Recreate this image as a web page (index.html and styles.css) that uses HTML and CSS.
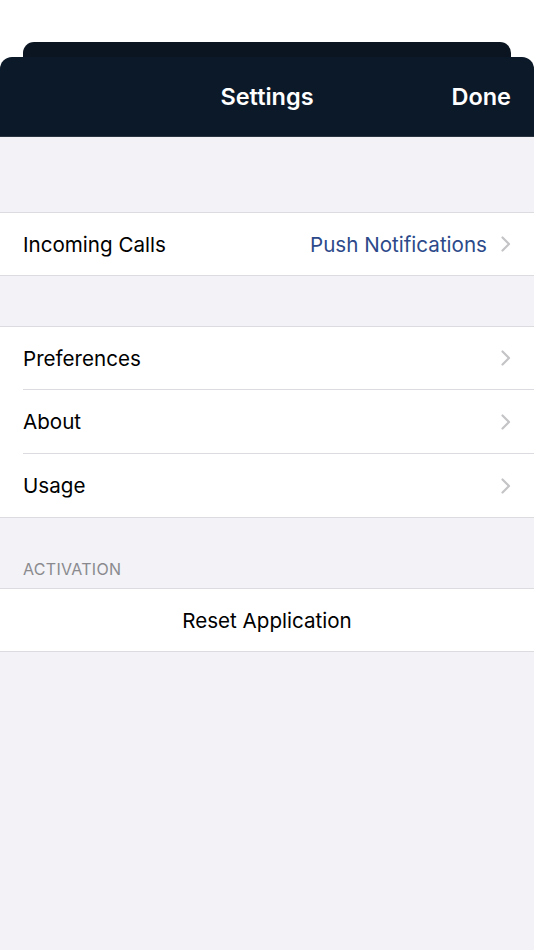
FILE: index.html
```html
<!DOCTYPE html>
<html lang="en">
<head>
  <meta charset="UTF-8">
  <title>Settings</title>
  <meta name="viewport" content="width=device-width, initial-scale=1">
  <link rel="stylesheet" href="styles.css">
</head>
<body>
  <div class="sheet-back"></div>
  <div class="sheet">
    <div class="navbar">
      <div></div>
      <div class="title">Settings</div>
      <div class="done">Done</div>
    </div>

    <div class="group first">
      <div class="row">
        <span class="label">Incoming Calls</span>
        <span class="value">Push Notifications</span>
        <svg class="chev" width="10" height="16" viewBox="0 0 10 16"><path d="M1.5 1.5 L8 8 L1.5 14.5" fill="none" stroke="#c4c4c7" stroke-width="2.2" stroke-linecap="round" stroke-linejoin="round"/></svg>
      </div>
    </div>

    <div class="group">
      <div class="row">
        <span class="label">Preferences</span>
        <svg class="chev" width="10" height="16" viewBox="0 0 10 16"><path d="M1.5 1.5 L8 8 L1.5 14.5" fill="none" stroke="#c4c4c7" stroke-width="2.2" stroke-linecap="round" stroke-linejoin="round"/></svg>
      </div>
      <div class="row">
        <span class="label">About</span>
        <svg class="chev" width="10" height="16" viewBox="0 0 10 16"><path d="M1.5 1.5 L8 8 L1.5 14.5" fill="none" stroke="#c4c4c7" stroke-width="2.2" stroke-linecap="round" stroke-linejoin="round"/></svg>
      </div>
      <div class="row">
        <span class="label">Usage</span>
        <svg class="chev" width="10" height="16" viewBox="0 0 10 16"><path d="M1.5 1.5 L8 8 L1.5 14.5" fill="none" stroke="#c4c4c7" stroke-width="2.2" stroke-linecap="round" stroke-linejoin="round"/></svg>
      </div>
    </div>

    <div class="section-title">ACTIVATION</div>
    <div class="group tight">
      <div class="row center">Reset Application</div>
    </div>
  </div>
</body>
</html>
```

FILE: styles.css
```css
body { margin: 0; padding: 0; background: #fff; font-family: Inter, "Open Sans", sans-serif; }
.sheet-back { margin: 42px 23px 0; height: 15px; background: #0b1521; border-radius: 11px 11px 0 0; }
.sheet { background: #f2f2f7; border-radius: 12px 12px 0 0; overflow: hidden; min-height: 893px; }
.navbar { height: 79px; background: #0c1928; color: #fff; display: grid; grid-template-columns: 1fr auto 1fr; align-items: center; font-size: 23.5px; font-weight: 600; padding: 0 23px; border-bottom: 1px solid #2a3440; }
.title { text-align: center; }
.done { text-align: right; }
.group { background: #fff; border-top: 1px solid #dcdce0; border-bottom: 1px solid #dcdce0; margin-top: 50px; }
.group.first { margin-top: 75px; }
.group.tight { margin-top: 0; }
.row { height: 62px; display: flex; align-items: center; margin-left: 23px; padding-right: 23px; font-size: 20.6px; color: #000; }
.row + .row { height: 63px; border-top: 1px solid #dcdce0; }
.label { flex: 1; }
.value { color: #2c4a8a; margin-right: 14px; }
.chev { display: block; }
.row.center { justify-content: center; margin-left: 0; padding-right: 0; }
.section-title { margin-top: 40px; padding: 0 23px 8px; font-size: 16px; color: #8a8a8e; letter-spacing: 0.3px; height: 22px; line-height: 22px; }
```
